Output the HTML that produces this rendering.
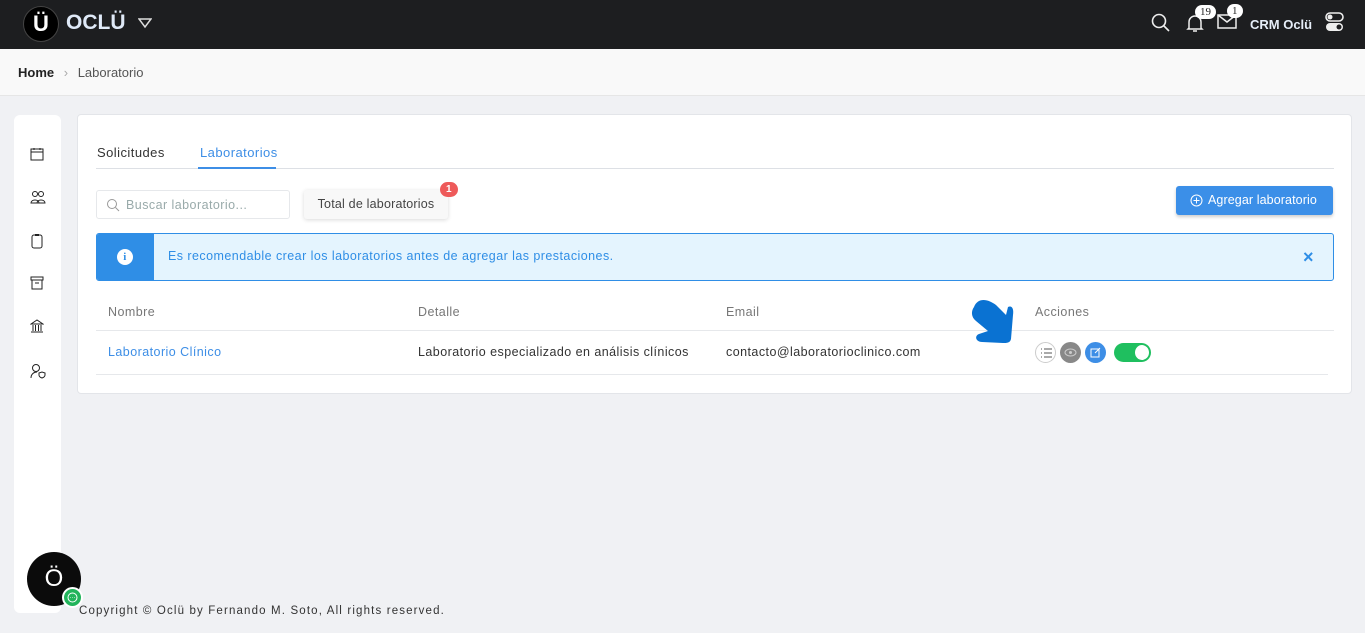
<!DOCTYPE html>
<html><head><meta charset="utf-8"><style>
*{box-sizing:border-box;margin:0;padding:0}
body{width:1365px;height:633px;overflow:hidden;background:#f0f1f4;font-family:"Liberation Sans",sans-serif;position:relative;color:#333}
.top{position:absolute;left:0;top:0;width:1365px;height:49px;background:#1d1e20}
.bc{position:absolute;left:0;top:49px;width:1365px;height:47px;background:#f9f9f9;border-bottom:1px solid #e6e6e6;font-size:13px;padding:16px 18px;color:#555}
.side{position:absolute;left:14px;top:115px;width:47px;height:498px;background:#fff;border-radius:6px}
.side svg{position:absolute;left:16px}
.card{position:absolute;left:77px;top:114px;width:1275px;height:280px;background:#fff;border:1px solid #e3e5e9;border-radius:4px;letter-spacing:.45px}
.abs{position:absolute}
.badge{position:absolute;background:#fff;color:#222;border-radius:9px;font-size:11px;padding:1px 5px;font-family:"Liberation Serif",serif}
</style></head><body>
<div class="top">
 <div class="abs" style="left:23px;top:6px;width:36px;height:36px;border-radius:50%;background:#000;border:1px solid #444;color:#fff;font-weight:bold;font-size:22px;text-align:center;line-height:34px">Ü</div>
 <div class="abs" style="left:66px;top:11px;color:#dfe9f7;font-weight:bold;font-size:21px">OCLÜ</div>
 <svg class="abs" style="left:138px;top:17px" width="14" height="12"><path d="M1 2h12L7 10z" fill="none" stroke="#ddd" stroke-width="1.5"/></svg>
 <svg class="abs" style="left:1151px;top:13px" width="20" height="20"><circle cx="8" cy="8" r="6.5" fill="none" stroke="#eee" stroke-width="1.6"/><path d="M13 13l5 5" stroke="#eee" stroke-width="1.6"/></svg>
 <svg class="abs" style="left:1186px;top:13px" width="18" height="20"><path d="M3 15V9a6 6 0 0112 0v6l1 1H2zM7 18h4" fill="none" stroke="#eee" stroke-width="1.5"/></svg>
 <span class="badge" style="left:1195px;top:5px">19</span>
 <svg class="abs" style="left:1217px;top:14px" width="20" height="16"><rect x="1" y="1" width="18" height="13" fill="none" stroke="#eee" stroke-width="1.5"/><path d="M1 1l9 7 9-7" fill="none" stroke="#eee" stroke-width="1.5"/></svg>
 <span class="badge" style="left:1227px;top:4px">1</span>
 <div class="abs" style="left:1250px;top:17px;color:#e6eef8;font-weight:bold;font-size:13px">CRM Oclü</div>
 <svg class="abs" style="left:1325px;top:12px" width="20" height="22"><rect x="1" y="1" width="17" height="8" rx="4" fill="none" stroke="#eee" stroke-width="1.6"/><circle cx="5" cy="5" r="2.5" fill="#eee"/><rect x="1" y="11" width="17" height="8" rx="4" fill="#eee"/><circle cx="14" cy="15" r="2.5" fill="#1d1e20"/></svg>
</div>
<div class="bc"><b style="color:#222">Home</b> <span style="color:#aaa;margin:0 6px">›</span> Laboratorio</div>
<div class="side">
 <svg style="top:32px" width="14" height="14"><rect x="1" y="2" width="12" height="11" fill="none" stroke="#222"/><path d="M1 5h12M4 1v2M10 1v2" stroke="#222"/></svg>
 <svg style="top:75px" width="16" height="14"><circle cx="5" cy="4" r="2.5" fill="none" stroke="#222"/><circle cx="11" cy="4" r="2.5" fill="none" stroke="#222"/><path d="M1 13c0-4 8-4 8 0zM7 13c0-4 8-4 8 0z" fill="none" stroke="#222"/></svg>
 <svg style="top:118px" width="14" height="16"><rect x="2" y="2" width="10" height="13" rx="2" fill="none" stroke="#222"/><rect x="5" y="1" width="4" height="2" fill="#222"/></svg>
 <svg style="top:161px" width="14" height="14"><rect x="1" y="1" width="12" height="3" fill="none" stroke="#222"/><rect x="2" y="4" width="10" height="9" fill="none" stroke="#222"/><path d="M5 7h4" stroke="#222"/></svg>
 <svg style="top:204px" width="14" height="14"><path d="M1 5L7 1l6 4zM1 13h12M3 6v6M5.5 6v6M8.5 6v6M11 6v6" fill="none" stroke="#222"/></svg>
 <svg style="top:248px" width="16" height="16"><circle cx="6" cy="5" r="3.5" fill="none" stroke="#222"/><path d="M1 15c0-4 3-6 6-6M9 10l3-1 3 1v2c0 2-3 3-3 3s-3-1-3-3z" fill="none" stroke="#222"/></svg>
</div>
<div class="card">
 <div class="abs" style="left:19px;top:30px;font-size:13px;color:#333">Solicitudes</div>
 <div class="abs" style="left:122px;top:30px;font-size:13px;color:#3d8ee6">Laboratorios</div>
 <div class="abs" style="left:18px;top:53px;width:1238px;height:1px;background:#dde0e5"></div>
 <div class="abs" style="left:120px;top:52px;width:78px;height:2px;background:#3d8ee6"></div>
 <div class="abs" style="left:18px;top:75px;width:194px;height:29px;border:1px solid #e6e8eb;border-radius:3px"></div>
 <svg class="abs" style="left:28px;top:83px" width="14" height="14"><circle cx="6" cy="6" r="4.5" fill="none" stroke="#999"/><path d="M9.5 9.5L13 13" stroke="#999"/></svg>
 <div class="abs" style="left:48px;top:83px;font-size:12.5px;color:#9aa">Buscar laboratorio...</div>
 <div class="abs" style="left:226px;top:75px;width:144px;height:29px;border-radius:3px;box-shadow:0 1px 4px rgba(0,0,0,.15);background:#f8f8f8;font-size:12.5px;color:#444;text-align:center;line-height:29px;letter-spacing:.2px">Total de laboratorios</div>
 <div class="abs" style="left:362px;top:67px;width:18px;height:15px;border-radius:8px;background:#ee5a5a;color:#fff;font-size:10px;font-weight:bold;text-align:center;line-height:15px">1</div>
 <div class="abs" style="left:1098px;top:71px;width:157px;height:29px;border-radius:3px;background:#3b8fe8;color:#fff;font-size:12.5px;line-height:29px;padding-left:32px;box-shadow:0 2px 3px rgba(0,0,0,.2);letter-spacing:.1px">Agregar laboratorio</div>
 <svg class="abs" style="left:1112px;top:79px" width="13" height="13"><circle cx="6.5" cy="6.5" r="5.5" fill="none" stroke="#fff"/><path d="M6.5 3.5v6M3.5 6.5h6" stroke="#fff"/></svg>
 <div class="abs" style="left:18px;top:118px;width:1238px;height:48px;border:1px solid #2f8ee6;border-radius:3px;background:#e4f4fe;overflow:hidden">
  <div class="abs" style="left:0;top:0;width:57px;height:48px;background:#2f8ee6"></div>
  <div class="abs" style="left:20px;top:15px;width:16px;height:16px;border-radius:50%;background:#fff;color:#2f8ee6;font-size:11px;font-weight:bold;text-align:center;line-height:16px;font-family:'Liberation Serif',serif">i</div>
  <div class="abs" style="left:71px;top:15px;font-size:12.5px;color:#2f8ee6">Es recomendable crear los laboratorios antes de agregar las prestaciones.</div>
  <div class="abs" style="left:1206px;top:13px;font-size:18px;color:#2f8ee6;font-weight:bold">×</div>
 </div>
 <div class="abs" style="left:30px;top:190px;font-size:12.5px;color:#777">Nombre</div>
 <div class="abs" style="left:340px;top:190px;font-size:12.5px;color:#777">Detalle</div>
 <div class="abs" style="left:648px;top:190px;font-size:12.5px;color:#777">Email</div>
 <div class="abs" style="left:957px;top:190px;font-size:12.5px;color:#777">Acciones</div>
 <div class="abs" style="left:18px;top:215px;width:1238px;height:1px;background:#e6e8eb"></div>
 <div class="abs" style="left:30px;top:230px;font-size:12.5px;color:#3d8ee6">Laboratorio Clínico</div>
 <div class="abs" style="left:340px;top:230px;font-size:12.5px;color:#333">Laboratorio especializado en análisis clínicos</div>
 <div class="abs" style="left:648px;top:230px;font-size:12.5px;color:#333">contacto@laboratorioclinico.com</div>
 <div class="abs" style="left:18px;top:259px;width:1232px;height:1px;background:#e6e8eb"></div>
 <div class="abs" style="left:957px;top:227px;width:21px;height:21px;border-radius:50%;border:1px solid #ccc;background:#fff"></div>
 <svg class="abs" style="left:962px;top:233px" width="12" height="10"><path d="M4 1h8M4 5h8M4 9h8M1 1h1M1 5h1M1 9h1" stroke="#555"/></svg>
 <div class="abs" style="left:982px;top:227px;width:21px;height:21px;border-radius:50%;background:#888"></div>
 <svg class="abs" style="left:986px;top:233px" width="13" height="9"><ellipse cx="6.5" cy="4.5" rx="5.5" ry="3.5" fill="none" stroke="#ccc"/><circle cx="6.5" cy="4.5" r="1.5" fill="#ccc"/></svg>
 <div class="abs" style="left:1007px;top:227px;width:21px;height:21px;border-radius:50%;background:#3d8ee6"></div>
 <svg class="abs" style="left:1012px;top:232px" width="11" height="11"><rect x="1" y="2" width="8" height="8" fill="none" stroke="#fff"/><path d="M5 6l5-5" stroke="#fff"/></svg>
 <div class="abs" style="left:1036px;top:228px;width:37px;height:19px;border-radius:10px;background:#1fbf5f"></div>
 <div class="abs" style="left:1057px;top:230px;width:14px;height:15px;border-radius:50%;background:#fff"></div>
 <svg class="abs" style="left:890px;top:180px" width="54" height="50"><path d="M6 12c4-10 14-8 22-2l10 10 2-8c4-2 6 2 5 8l-2 24c-1 4-4 4-8 4L14 47c-6 0-8-6-3-8l9-3-12-10C3 22 3 16 6 12z" fill="#0a72d2"/></svg>
</div>
<div class="abs" style="left:79px;top:605px;font-size:11.5px;color:#333;letter-spacing:1.15px">Copyright © Oclü by Fernando M. Soto, All rights reserved.</div>
<div class="abs" style="left:27px;top:552px;width:54px;height:54px;border-radius:50%;background:#0b0b0b;color:#fff;font-size:24px;text-align:center;line-height:54px">Ö</div>
<div class="abs" style="left:62px;top:587px;width:21px;height:21px;border-radius:50%;background:#22b45b;border:2px solid #fff"></div>
<svg class="abs" style="left:67px;top:592px" width="11" height="11"><circle cx="5.5" cy="5.5" r="4.5" fill="none" stroke="#fff"/><path d="M3.5 5.5h.5M5.3 5.5h.5M7 5.5h.5" stroke="#fff"/></svg>
</body></html>
